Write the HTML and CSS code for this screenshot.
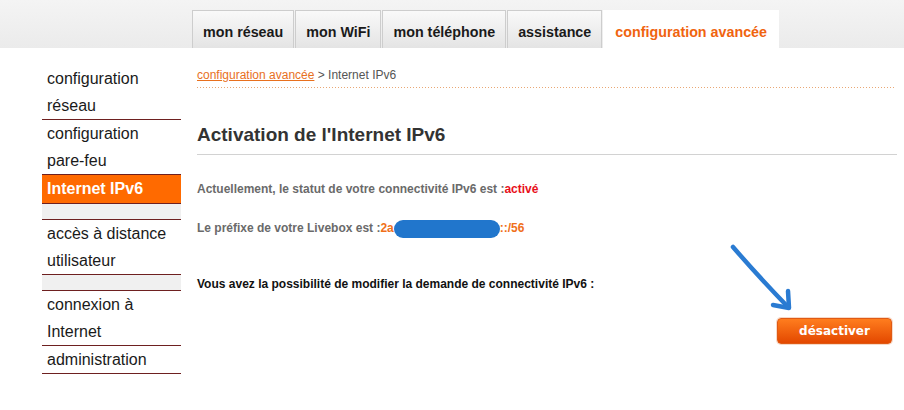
FILE: index.html
```html
<!DOCTYPE html>
<html lang="fr">
<head>
<meta charset="utf-8">
<title>Internet IPv6</title>
<link rel="stylesheet" href="styles.css">
</head>
<body>
<header class="topbar">
  <nav class="tabs">
    <a class="tab">mon réseau</a>
    <a class="tab">mon WiFi</a>
    <a class="tab">mon téléphone</a>
    <a class="tab">assistance</a>
    <a class="tab tab-active">configuration avancée</a>
  </nav>
</header>
<div class="page">
  <aside class="sidebar">
    <div class="side-item">configuration<br>réseau</div>
    <div class="side-item">configuration<br>pare-feu</div>
    <div class="side-item side-active">Internet IPv6</div>
    <div class="side-spacer"></div>
    <div class="side-item">accès à distance<br>utilisateur</div>
    <div class="side-spacer"></div>
    <div class="side-item">connexion à<br>Internet</div>
    <div class="side-item">administration</div>
  </aside>
  <main class="main">
    <div class="crumb"><a class="crumb-link">configuration avancée</a> &gt; Internet IPv6</div>
    <div class="dots"></div>
    <h1 class="title">Activation de l'Internet IPv6</h1>
    <p class="info info-status">Actuellement, le statut de votre connectivité IPv6 est :<span class="red">activé</span></p>
    <p class="info info-prefix">Le préfixe de votre Livebox est :<span class="orange">2a<span class="blob"></span>::/56</span></p>
    <p class="info info-ask">Vous avez la possibilité de modifier la demande de connectivité IPv6 :</p>
    <div class="actions"><button class="btn">désactiver</button></div>
  </main>
</div>
<svg class="arrow" width="904" height="410" viewBox="0 0 904 410">
  <path d="M733 247 Q 758 276 788 307" fill="none" stroke="#2a7bd2" stroke-width="4.5" stroke-linecap="round"/>
  <path d="M788 291 L789 308 L773 305" fill="none" stroke="#2a7bd2" stroke-width="4.5" stroke-linecap="round" stroke-linejoin="round"/>
</svg>
</body>
</html>
```
FILE: styles.css
```css
* { box-sizing: border-box; }
html, body { margin: 0; padding: 0; }
body {
  background: #fff;
  font-family: "Liberation Sans", Arial, sans-serif;
  color: #1a1a1a;
  position: relative;
  width: 904px;
  height: 410px;
  overflow: hidden;
}
.topbar {
  height: 48px;
  background: linear-gradient(#f4f4f4, #ebebeb);
  display: flex;
  align-items: flex-end;
}
.tabs {
  display: flex;
  margin-left: 192px;
  gap: 1px;
}
.tab {
  height: 38px;
  padding: 4px 10px 0;
  display: flex;
  align-items: center;
  font-weight: bold;
  font-size: 14.3px;
  color: #1a1a1a;
  background: linear-gradient(#f9f9f9, #e4e4e4);
  border: 1px solid #cdcdcd;
  border-bottom: none;
}
.tab-active {
  background: #fff;
  border-color: #fff;
  color: #f0640f;
  padding: 4px 11px 0 11px;
}
.page { display: flex; }
.sidebar {
  width: 139px;
  margin-left: 42px;
  margin-top: 17px;
}
.side-item {
  font-size: 16px;
  line-height: 27px;
  padding-left: 5px;
  border-bottom: 1px solid #6e2020;
  color: #1a1a1a;
}
.side-active {
  background: #ff6a00;
  color: #fff;
  font-weight: bold;
  line-height: 28px;
}
.side-spacer {
  height: 16px;
  background: #f0f0f0;
  border-bottom: 1px solid #6e2020;
}
.main {
  margin-left: 16px;
  width: 700px;
  padding-top: 20px;
}
.crumb {
  font-size: 12px;
  line-height: 15px;
  color: #555;
}
.crumb-link {
  color: #e8701e;
  text-decoration: underline;
}
.dots {
  margin-top: 4px;
  height: 1px;
  margin-right: 2px;
  background: repeating-linear-gradient(to right, #e9a774 0 1px, transparent 1px 3px);
}
.title {
  margin: 36px 0 0;
  font-size: 19px;
  line-height: 22px;
  font-weight: bold;
  color: #333;
  padding-bottom: 8px;
  border-bottom: 1px solid #d2d2d2;
}
.info {
  margin: 0;
  font-size: 12px;
  line-height: 15px;
  font-weight: bold;
  color: #6a6a6a;
}
.info-status { margin-top: 27px; }
.info-prefix { margin-top: 24px; }
.info-ask { margin-top: 41px; color: #111; }
.red { color: #e8101c; }
.orange { color: #f0701a; }
.blob {
  display: inline-block;
  width: 106px;
  height: 18px;
  margin: -3px 0;
  vertical-align: middle;
  border-radius: 9px;
  background: #2176cc;
}
.actions {
  display: flex;
  justify-content: flex-end;
  padding-right: 5px;
  margin-top: 26px;
}
.btn {
  width: 115px;
  height: 26px;
  padding: 0;
  border: 1px solid #e05a14;
  border-radius: 4px;
  background: linear-gradient(#ff7d1e, #e34800);
  box-shadow: 0 0 0 1px #f6d9c8;
  color: #fff;
  font-family: "DejaVu Sans", Verdana, sans-serif;
  font-weight: bold;
  font-size: 12px;
}
.arrow {
  position: absolute;
  left: 0;
  top: 0;
  pointer-events: none;
}
```
